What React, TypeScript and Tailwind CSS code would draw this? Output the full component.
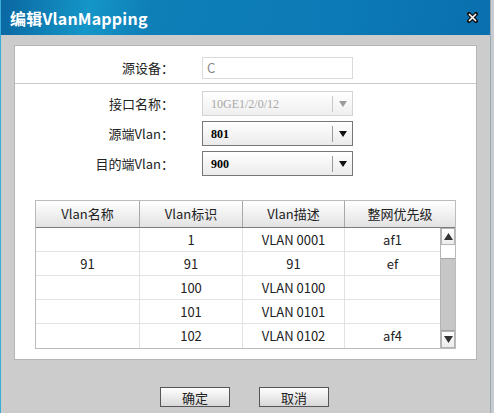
import { ReactNode } from "react";

const CJK = "font-['Noto_Sans_CJK_SC','Noto_Sans',sans-serif]";

type Row = { name: string; id: string; desc: string; prio: string };

const rows: Row[] = [
  { name: "", id: "1", desc: "VLAN 0001", prio: "af1" },
  { name: "91", id: "91", desc: "91", prio: "ef" },
  { name: "", id: "100", desc: "VLAN 0100", prio: "" },
  { name: "", id: "101", desc: "VLAN 0101", prio: "" },
  { name: "", id: "102", desc: "VLAN 0102", prio: "af4" },
];

const FieldRow = ({ label, children }: { label: string; children: ReactNode }) => (
  <div className="flex items-center">
    <div className="w-[160px] text-right text-[13px] text-[#222] pr-[1px]">{label}</div>
    <div className="ml-[27px]">{children}</div>
  </div>
);

const Select = ({ value, disabled }: { value: string; disabled?: boolean }) => (
  <div
    className={
      disabled
        ? "w-[151px] h-[25px] flex items-center border border-[#d4d4d4] bg-gradient-to-b from-white to-[#efefef]"
        : "w-[151px] h-[25px] flex items-center border border-[#777] bg-gradient-to-b from-white to-[#ebebeb]"
    }
  >
    <span
      className={
        disabled
          ? "flex-1 pl-[8px] font-['Liberation_Serif',serif] text-[12px] text-[#a8a8a8]"
          : "flex-1 pl-[8px] font-['Liberation_Serif',serif] font-bold text-[12px] text-black"
      }
    >
      {value}
    </span>
    <div className={disabled ? "w-px h-[16px] bg-[#c8c8c8]" : "w-px h-[16px] bg-[#9a9a9a]"} />
    <div className="w-[19px] flex justify-center">
      <svg width="8" height="6" viewBox="0 0 8 6">
        <polygon points="0,0 8,0 4,6" fill={disabled ? "#9a9a9a" : "#111"} />
      </svg>
    </div>
  </div>
);

const Cell = ({ children, w, last }: { children?: ReactNode; w: string; last?: boolean }) => (
  <div className={`${w} ${last ? "" : "border-r border-[#e2e2e2]"} flex items-center justify-center`}>
    {children}
  </div>
);

const ScrollBtn = ({ up }: { up?: boolean }) => (
  <div className="h-[17px] border border-[#b4b4b4] bg-gradient-to-b from-white to-[#ececec] flex items-center justify-center">
    <svg width="9" height="7" viewBox="0 0 9 7">
      <polygon points={up ? "0,7 9,7 4.5,0" : "0,0 9,0 4.5,7"} fill="#333" />
    </svg>
  </div>
);

const Button = ({ text }: { text: string }) => (
  <button className="w-[70px] h-[20px] border border-[#555] bg-gradient-to-b from-white to-[#d8d8d8] text-[13px] text-[#222] leading-none">
    {text}
  </button>
);

export default function App() {
  return (
    <div className={`w-[494px] h-[413px] bg-[#cccccc] flex overflow-hidden ${CJK}`}>
      <div className="w-[490px] h-full flex flex-col border-l border-[#38aedb]">
        {/* title bar */}
        <div className="h-[35px] flex items-center justify-between pl-[9px] pr-[12px] bg-[linear-gradient(100deg,#0a66a0_0%,#1496c8_18%,#0f7fb8_30%,#0b7ab6_70%,#0a6fae_100%)]">
          <span className="text-white font-bold text-[16px] tracking-[0.2px]">编辑VlanMapping</span>
          <svg width="11" height="11" viewBox="0 0 11 11">
            <path d="M2 2 L9 9 M9 2 L2 9" stroke="#111" strokeWidth="4" strokeLinecap="square" />
            <path d="M2 2 L9 9 M9 2 L2 9" stroke="#fff" strokeWidth="1.6" />
          </svg>
        </div>

        <div className="flex-1 flex flex-col px-[13px] pt-[10px]">
          {/* panel */}
          <div className="h-[315px] bg-white border border-[#b4b4b4] flex flex-col">
            <div className="pt-[11px] pb-[4px] border-b border-[#c8c8c8]">
              <FieldRow label="源设备：">
                <div className="w-[151px] h-[22px] border border-[#dadada] pl-[4px] flex items-center text-[13px] text-[#888]">
                  C
                </div>
              </FieldRow>
            </div>

            <div className="flex flex-col gap-[5px] pt-[7px]">
              <FieldRow label="接口名称：">
                <Select value="10GE1/2/0/12" disabled />
              </FieldRow>
              <FieldRow label="源端Vlan：">
                <Select value="801" />
              </FieldRow>
              <FieldRow label="目的端Vlan：">
                <Select value="900" />
              </FieldRow>
            </div>

            {/* table */}
            <div className="mt-[24px] mx-[20px] border border-[#bcbcbc] text-[13px] text-[#222]">
              <div className="h-[27px] flex border-b border-[#7c7c7c] bg-gradient-to-b from-white to-[#e2e2e2]">
                <div className="w-[104px] border-r border-[#a8a8a8] flex items-center justify-center">Vlan名称</div>
                <div className="w-[103px] border-r border-[#a8a8a8] flex items-center justify-center">Vlan标识</div>
                <div className="w-[102px] border-r border-[#a8a8a8] flex items-center justify-center">Vlan描述</div>
                <div className="flex-1 flex items-center justify-center">整网优先级</div>
              </div>
              <div className="flex">
                <div className="flex-1 flex flex-col">
                  {rows.map((r, i) => (
                    <div
                      key={i}
                      className={i < rows.length - 1 ? "h-[24px] flex border-b border-[#e2e2e2]" : "h-[24px] flex"}
                    >
                      <Cell w="w-[104px]">{r.name}</Cell>
                      <Cell w="w-[103px]">{r.id}</Cell>
                      <Cell w="w-[102px]">{r.desc}</Cell>
                      <Cell w="flex-1" last>
                        {r.prio}
                      </Cell>
                    </div>
                  ))}
                </div>
                <div className="w-[15px] flex flex-col border-l border-[#b4b4b4]">
                  <ScrollBtn up />
                  <div className="h-[13px] bg-white" />
                  <div className="flex-1 bg-[#c6c6c6] border-y border-[#a4a4a4]" />
                  <ScrollBtn />
                </div>
              </div>
            </div>
          </div>

          <div className="flex justify-center gap-[29px] mt-[27px] ml-[-2px]">
            <Button text="确定" />
            <Button text="取消" />
          </div>
        </div>
      </div>
      <div className="flex-1 bg-[#c8ccd0] border-l border-[#9aa8b4]" />
    </div>
  );
}
